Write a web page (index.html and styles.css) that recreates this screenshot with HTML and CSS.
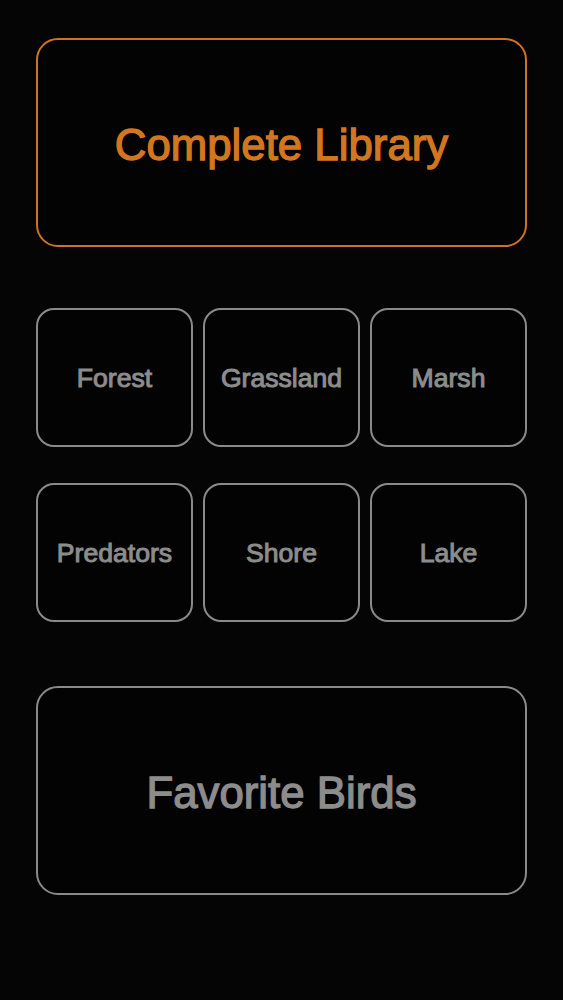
FILE: index.html
```html
<!DOCTYPE html>
<html>
<head>
<meta charset="utf-8">
<link rel="stylesheet" href="styles.css">
</head>
<body>
<main class="screen">
  <div class="tile tile-large tile-active">Complete Library</div>
  <div class="grid">
    <div class="tile tile-small">Forest</div>
    <div class="tile tile-small">Grassland</div>
    <div class="tile tile-small">Marsh</div>
    <div class="tile tile-small">Predators</div>
    <div class="tile tile-small">Shore</div>
    <div class="tile tile-small">Lake</div>
  </div>
  <div class="tile tile-large">Favorite Birds</div>
</main>
</body>
</html>
```
FILE: styles.css
```css
html, body {
  margin: 0;
  padding: 0;
  background: #050505;
}
body {
  font-family: "Liberation Sans", Arial, sans-serif;
  width: 563px;
  height: 1000px;
}
.screen {
  padding: 38px 36px 0 36px;
  display: flex;
  flex-direction: column;
}
.tile {
  box-sizing: border-box;
  border: 2px solid #8a8a8a;
  color: #8c8c8c;
  -webkit-text-stroke: 1.3px #8c8c8c;
  display: flex;
  align-items: center;
  justify-content: center;
  font-weight: 400;
  background: #030303;
}
.tile-large {
  height: 209px;
  border-radius: 22px;
  font-size: 43.8px;
  padding-top: 4px;
}
.tile-active {
  border-color: #d0731d;
  color: #d2771f;
  -webkit-text-stroke-color: #d2771f;
}
.grid {
  margin-top: 61px;
  margin-bottom: 64px;
  display: grid;
  grid-template-columns: repeat(3, 1fr);
  column-gap: 10px;
  row-gap: 36px;
}
.tile-small {
  height: 139px;
  border-radius: 18px;
  font-size: 26.6px;
  padding-top: 2px;
  -webkit-text-stroke-width: 1px;
}
```
